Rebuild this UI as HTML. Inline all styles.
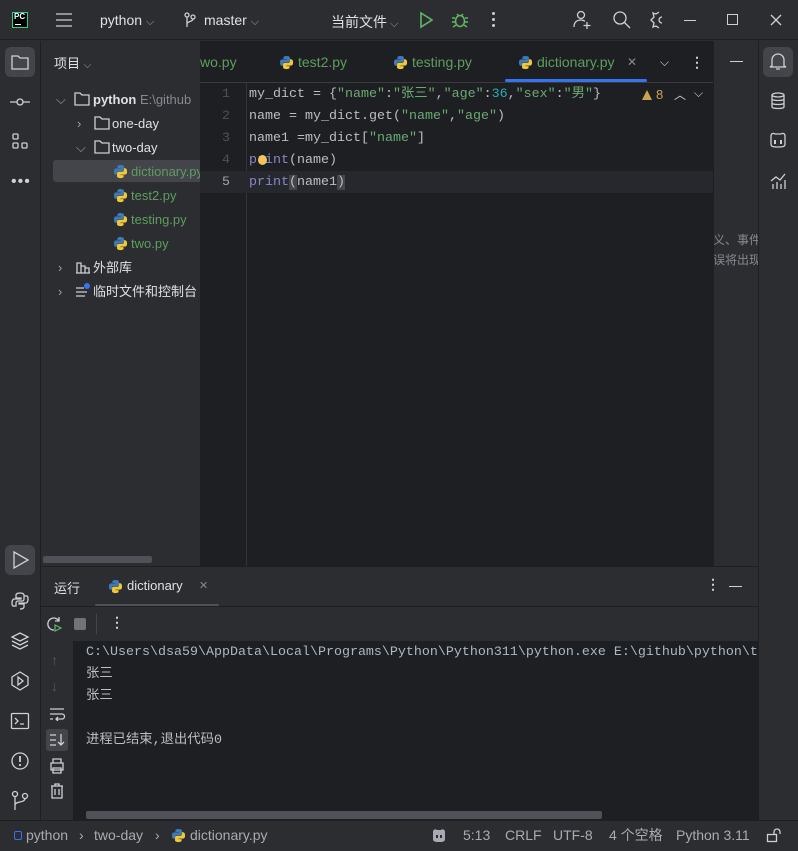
<!DOCTYPE html>
<html><head><meta charset="utf-8">
<style>
*{margin:0;padding:0;box-sizing:border-box}
body{width:798px;height:851px;overflow:hidden;background:#2b2d30;font-family:"Liberation Sans","Noto Sans CJK SC",sans-serif;font-size:13px;color:#dfe1e5;position:relative}
.a{position:absolute;white-space:nowrap}
.mono{font-family:"Liberation Mono","Noto Sans CJK SC",monospace;font-size:13.33px;white-space:pre}
.g{color:#6aab73}.k{color:#cf8e6d}.n{color:#2aacb8}.f{color:#56a8f5}.b{color:#8888c6}
.ic{stroke:#ced0d6;fill:none;stroke-width:1.3}
.grn{color:#5e9e5e}
</style></head><body>
<svg width="0" height="0" style="position:absolute"><defs>
<symbol id="py" viewBox="0 0 16 16"><path d="M8 1C4.5 1 4.7 2.5 4.7 2.5V4.2H8.1V4.7H3.3S1 4.4 1 8s2 3.5 2 3.5H4.3V9.8S4.2 7.7 6.3 7.7H9.7S11.7 7.7 11.7 5.8V2.9S12 1 8 1z" fill="#3d7ab8"/><path d="M8 15c3.5 0 3.3-1.5 3.3-1.5V11.8H7.9V11.3H12.7S15 11.6 15 8s-2-3.5-2-3.5H11.7V6.2S11.8 8.3 9.7 8.3H6.3S4.3 8.3 4.3 10.2V13.1S4 15 8 15z" fill="#f0c93a"/></symbol>
</defs></svg>

<!-- title bar -->
<div class="a" style="left:0;top:0;width:798px;height:40px;background:#2b2d30;border-bottom:1px solid #1e1f22"></div>
<div class="a" style="left:12px;top:12px;width:16px;height:16px;background:#000;border:1px solid #21d789"><div style="color:#fff;font-size:8px;font-weight:bold;line-height:8px;margin-left:1px">PC</div><div style="width:6px;height:1px;background:#fff;margin:3px 0 0 2px"></div></div>
<svg class="a" style="left:55px;top:12px" width="18" height="16"><path class="ic" d="M1 2H17M1 8H17M1 14H17"/></svg>
<div class="a" style="left:100px;top:12px;font-size:14px">python <span style="color:#9da0a8;font-size:11px">⌵</span></div>
<svg class="a" style="left:183px;top:12px" width="14" height="16"><circle class="ic" cx="4" cy="3" r="2"/><circle class="ic" cx="10" cy="5" r="2"/><path class="ic" d="M4 5V15M10 7C10 10 4 9 4 12"/></svg>
<div class="a" style="left:204px;top:12px;font-size:14px">master <span style="color:#9da0a8;font-size:11px">⌵</span></div>
<div class="a" style="left:331px;top:12px;font-size:14px">当前文件<span style="color:#9da0a8;font-size:11px"> ⌵</span></div>
<svg class="a" style="left:418px;top:11px" width="16" height="18"><path d="M3 2L14 9L3 16Z" fill="none" stroke="#5fb865" stroke-width="1.6"/></svg>
<svg class="a" style="left:451px;top:11px" width="18" height="18"><ellipse cx="9" cy="10" rx="4.5" ry="5.5" fill="none" stroke="#5fb865" stroke-width="1.5"/><path d="M1 7H4M14 7H17M1 11H4M14 11H17M2 16L5 14M16 16L13 14M6 3L8 5M12 3L10 5" stroke="#5fb865" stroke-width="1.4"/></svg>
<div class="a" style="left:492px;top:12px;width:3px;height:16px"><div style="width:3px;height:3px;background:#ced0d6;border-radius:2px;margin-bottom:3px"></div><div style="width:3px;height:3px;background:#ced0d6;border-radius:2px;margin-bottom:3px"></div><div style="width:3px;height:3px;background:#ced0d6;border-radius:2px"></div></div>
<svg class="a" style="left:573px;top:10px" width="20" height="20"><circle class="ic" cx="8" cy="5" r="3.5"/><path class="ic" d="M1 17C1 12 4 10 8 10C10 10 11 11 12 11M14 12V19M10.5 15.5H17.5"/></svg>
<svg class="a" style="left:612px;top:10px" width="20" height="20"><circle class="ic" cx="8" cy="8" r="6" stroke-width="1.5"/><path class="ic" d="M12.5 12.5L18 18" stroke-width="1.6"/></svg>
<svg class="a" style="left:650px;top:10px" width="14" height="20"><path class="ic" d="M9 2L6 4L3 3L4 7L1 10L4 13L3 17L6 16L9 18M12 7A3 3 0 0 0 12 13"/></svg>
<div class="a" style="left:684px;top:20px;width:12px;height:1px;background:#ced0d6"></div>
<div class="a" style="left:727px;top:14px;width:11px;height:11px;border:1px solid #ced0d6"></div>
<svg class="a" style="left:770px;top:14px" width="12" height="12"><path class="ic" d="M1 1L11 11M11 1L1 11"/></svg>

<!-- left strip -->
<div class="a" style="left:0;top:41px;width:41px;height:779px;background:#2b2d30;border-right:1px solid #1e1f22"></div>
<div class="a" style="left:5px;top:47px;width:30px;height:30px;background:#43454a;border-radius:6px"></div>
<svg class="a" style="left:11px;top:53px" width="18" height="18"><path class="ic" d="M1 3H7L9 5H17V16H1Z"/></svg>
<svg class="a" style="left:10px;top:95px" width="20" height="14"><circle class="ic" cx="10" cy="7" r="3"/><path class="ic" d="M0 7H7M13 7H20"/></svg>
<svg class="a" style="left:11px;top:133px" width="18" height="18"><rect class="ic" x="2" y="1" width="5" height="5" rx="1"/><rect class="ic" x="2" y="10" width="5" height="5" rx="1"/><rect class="ic" x="11" y="10" width="5" height="5" rx="1"/></svg>
<div class="a" style="left:11px;top:180px;color:#ced0d6;font-size:16px;letter-spacing:1px;line-height:4px">•••</div>
<div class="a" style="left:5px;top:545px;width:30px;height:30px;background:#43454a;border-radius:6px"></div>
<svg class="a" style="left:12px;top:551px" width="18" height="18"><path class="ic" d="M2 1L16 9L2 17Z" stroke-width="1.4"/></svg>
<svg class="a" style="left:10px;top:591px" width="20" height="20"><path class="ic" d="M10 2C6 2 6 4 6 4V7H11V8H4S2 8 2 12 4 15 4 15H6V12S6 10 8 10H12S14 10 14 8V4S14 2 10 2ZM10 18C14 18 14 16 14 16V13H9V12H16S18 12 18 8 16 5 16 5H14"/></svg>
<svg class="a" style="left:10px;top:631px" width="20" height="20"><path class="ic" d="M10 2L18 6L10 10L2 6ZM2 10L10 14L18 10M2 14L10 18L18 14"/></svg>
<svg class="a" style="left:10px;top:671px" width="20" height="20"><path class="ic" d="M10 1L18 6V14L10 19L2 14V6Z"/><path class="ic" d="M8 6L13 10L8 14Z"/></svg>
<svg class="a" style="left:10px;top:711px" width="20" height="20"><rect class="ic" x="1.5" y="2.5" width="17" height="15" rx="1"/><path class="ic" d="M5 7L8 10L5 13M10 13H14"/></svg>
<svg class="a" style="left:10px;top:751px" width="20" height="20"><circle class="ic" cx="10" cy="10" r="8"/><path d="M10 5V11" stroke="#ced0d6" stroke-width="1.8"/><circle cx="10" cy="14" r="1.1" fill="#ced0d6"/></svg>
<svg class="a" style="left:10px;top:790px" width="20" height="22"><circle class="ic" cx="5" cy="4" r="2.5"/><circle class="ic" cx="15" cy="6" r="2.5"/><path class="ic" d="M5 6.5V20M15 8.5C15 13 5 11 5 15"/></svg>

<!-- project panel -->
<div class="a" style="left:41px;top:41px;width:159px;height:525px;background:#2b2d30"></div>
<div class="a" style="left:54px;top:53px;font-size:13px">项目 <span style="color:#9da0a8;font-size:10px">⌵</span></div>
<div class="a" style="left:53px;top:160px;width:147px;height:22px;background:#43454a;border-radius:3px 0 0 3px"></div>
<div class="a" style="left:0;top:0;width:200px;height:320px;font-size:13px;line-height:24px;overflow:hidden">
<div class="a" style="left:56px;top:88px;color:#9da0a8">⌵</div>
<svg class="a" style="left:74px;top:92px" width="16" height="14"><path class="ic" d="M1 1H6L8 3H15V13H1Z"/></svg>
<div class="a" style="left:93px;top:88px;font-weight:bold">python <span style="color:#868991;font-weight:normal">E:\github</span></div>
<div class="a" style="left:77px;top:112px;color:#9da0a8">›</div>
<svg class="a" style="left:94px;top:116px" width="16" height="14"><path class="ic" d="M1 1H6L8 3H15V13H1Z"/></svg>
<div class="a" style="left:112px;top:112px">one-day</div>
<div class="a" style="left:76px;top:136px;color:#9da0a8">⌵</div>
<svg class="a" style="left:94px;top:140px" width="16" height="14"><path class="ic" d="M1 1H6L8 3H15V13H1Z"/></svg>
<div class="a" style="left:112px;top:136px">two-day</div>
<svg class="a" style="left:113px;top:164px" width="15" height="15"><use href="#py"/></svg>
<div class="a grn" style="left:131px;top:160px">dictionary.py</div>
<svg class="a" style="left:113px;top:188px" width="15" height="15"><use href="#py"/></svg>
<div class="a grn" style="left:131px;top:184px">test2.py</div>
<svg class="a" style="left:113px;top:212px" width="15" height="15"><use href="#py"/></svg>
<div class="a grn" style="left:131px;top:208px">testing.py</div>
<svg class="a" style="left:113px;top:236px" width="15" height="15"><use href="#py"/></svg>
<div class="a grn" style="left:131px;top:232px">two.py</div>
<div class="a" style="left:58px;top:256px;color:#9da0a8">›</div>
<svg class="a" style="left:75px;top:260px" width="16" height="14"><path class="ic" d="M1 13H15M2 13V3H6V13M6 6H10V13M10 8H14V13"/></svg>
<div class="a" style="left:93px;top:256px">外部库</div>
<div class="a" style="left:58px;top:280px;color:#9da0a8">›</div>
<svg class="a" style="left:75px;top:282px" width="16" height="16"><path class="ic" d="M1 6H9M1 10H12M1 14H10"/><circle cx="12" cy="4" r="3" fill="#3574f0"/></svg>
<div class="a" style="left:93px;top:280px">临时文件和控制台</div>
</div>
<div class="a" style="left:43px;top:556px;width:109px;height:7px;background:#4e5157;border-radius:2px"></div>

<!-- editor -->
<div class="a" style="left:200px;top:41px;width:513px;height:525px;background:#1e1f22"></div>
<div class="a" style="left:200px;top:82px;width:513px;height:1px;background:#393b40"></div>
<div class="a" style="left:200px;top:42px;width:513px;height:41px;font-size:14px;line-height:41px;overflow:hidden">
<span class="a grn" style="left:0">wo.py</span>
<svg class="a" style="left:79px;top:13px" width="15" height="15"><use href="#py"/></svg><span class="a grn" style="left:98px">test2.py</span>
<svg class="a" style="left:193px;top:13px" width="15" height="15"><use href="#py"/></svg><span class="a grn" style="left:212px">testing.py</span>
<svg class="a" style="left:318px;top:13px" width="15" height="15"><use href="#py"/></svg><span class="a grn" style="left:337px">dictionary.py</span>
<span class="a" style="left:427px;color:#868991;font-size:12px">✕</span>
<span class="a" style="left:460px;color:#ced0d6;font-size:12px">⌵</span>
<span class="a" style="left:490px;color:#ced0d6;font-weight:bold">⋮</span>
</div>
<div class="a" style="left:505px;top:79px;width:142px;height:3px;background:#3574f0;border-radius:2px"></div>
<div class="a" style="left:246px;top:83px;width:1px;height:483px;background:#313438"></div>
<div class="a" style="left:200px;top:171px;width:513px;height:22px;background:#26282e"></div>
<div class="a mono" style="left:200px;top:84px;width:30px;text-align:right;color:#4b5059;line-height:22px">1
2
3
4
<span style="color:#a1a3ab">5</span></div>
<div class="a mono" style="left:249px;top:84px;line-height:22px;color:#bcbec4">my_dict = {<span class="g">"name"</span>:<span class="g">"张三"</span>,<span class="g">"age"</span>:<span class="n">36</span>,<span class="g">"sex"</span>:<span class="g">"男"</span>}
name = my_dict.get(<span class="g">"name"</span>,<span class="g">"age"</span>)
name1 =my_dict[<span class="g">"name"</span>]
<span class="b">print</span>(name)
<span class="b">print</span><span style="background:#43454a">(</span>name1<span style="background:#43454a">)</span></div>
<div class="a" style="left:258px;top:155px;width:9px;height:10px;background:#f2c55c;border-radius:50%"></div>
<svg class="a" style="left:641px;top:89px" width="12" height="12"><path d="M6 1L11 11H1Z" fill="#c7a450"/></svg>
<div class="a" style="left:656px;top:87px;color:#c7a450;font-size:13px">8</div>
<div class="a" style="left:674px;top:86px;color:#ced0d6;font-size:12px">︿</div>
<div class="a" style="left:694px;top:86px;color:#ced0d6;font-size:12px">⌵</div>

<!-- right panel -->
<div class="a" style="left:713px;top:41px;width:45px;height:525px;background:#2b2d30;border-left:1px solid #1e1f22;overflow:hidden">
<div class="a" style="left:16px;top:20px;width:13px;height:1px;background:#ced0d6"></div>
<div class="a" style="left:-1px;top:189px;color:#868991;font-size:12px;line-height:20px">义、事件<br>误将出现</div>
</div>
<div class="a" style="left:758px;top:41px;width:40px;height:779px;background:#2b2d30;border-left:1px solid #1e1f22"></div>
<div class="a" style="left:763px;top:47px;width:30px;height:30px;background:#43454a;border-radius:6px"></div>
<svg class="a" style="left:769px;top:52px" width="18" height="20"><path class="ic" d="M3 14V8A6 6 0 0 1 15 8V14L17 15H1ZM7 17H11"/></svg>
<svg class="a" style="left:770px;top:92px" width="16" height="18"><ellipse class="ic" cx="8" cy="3" rx="6" ry="2"/><path class="ic" d="M2 3V15C2 17 14 17 14 15V3M2 7C2 9 14 9 14 7M2 11C2 13 14 13 14 11"/></svg>
<svg class="a" style="left:768px;top:131px" width="20" height="18"><path class="ic" d="M3 5C3 2 6 2 7 3H13C14 2 17 2 17 5V13C17 16 14 16 10 16C6 16 3 16 3 13Z"/><rect x="6" y="9" width="2" height="4" fill="#ced0d6"/><rect x="12" y="9" width="2" height="4" fill="#ced0d6"/></svg>
<svg class="a" style="left:770px;top:172px" width="16" height="18"><path class="ic" d="M1 9L6 5L10 8L15 2M3 17V12M7 17V10M11 17V12M15 17V8"/></svg>

<!-- run panel -->
<div class="a" style="left:41px;top:566px;width:717px;height:1px;background:#1e1f22"></div>
<div class="a" style="left:54px;top:578px;font-size:13px">运行</div>
<svg class="a" style="left:108px;top:579px" width="15" height="15"><use href="#py"/></svg>
<div class="a" style="left:127px;top:578px;font-size:13px">dictionary</div>
<div class="a" style="left:199px;top:579px;color:#868991;font-size:11px">✕</div>
<div class="a" style="left:95px;top:604px;width:124px;height:2px;background:#4e5157;border-radius:1px"></div>
<div class="a" style="left:706px;top:576px;color:#ced0d6;font-weight:bold;font-size:14px">⋮</div>
<div class="a" style="left:729px;top:586px;width:13px;height:1px;background:#ced0d6"></div>
<div class="a" style="left:41px;top:606px;width:717px;height:1px;background:#1e1f22"></div>
<svg class="a" style="left:46px;top:616px" width="16" height="16"><path class="ic" d="M13 5A6 6 0 1 0 8 14M13 1V5H9"/><path d="M9 9L15 12L9 15Z" fill="none" stroke="#5fb865" stroke-width="1.2"/></svg>
<div class="a" style="left:74px;top:618px;width:12px;height:12px;background:#6f737a;border-radius:2px"></div>
<div class="a" style="left:96px;top:614px;width:1px;height:20px;background:#43454a"></div>
<div class="a" style="left:110px;top:614px;color:#ced0d6;font-weight:bold;font-size:14px">⋮</div>
<div class="a" style="left:41px;top:641px;width:717px;height:179px;background:#1e1f22"></div>
<div class="a" style="left:41px;top:641px;width:32px;height:179px;background:#2b2d30"></div>
<div class="a" style="left:51px;top:652px;color:#55585e;font-size:14px">↑</div>
<div class="a" style="left:51px;top:678px;color:#55585e;font-size:14px">↓</div>
<svg class="a" style="left:48px;top:707px" width="18" height="14"><path class="ic" d="M2 2H16M2 7H14A2.5 2.5 0 0 1 14 12H8M10 10L8 12L10 14M2 12H5"/></svg>
<div class="a" style="left:46px;top:729px;width:22px;height:22px;background:#43454a;border-radius:3px"></div>
<svg class="a" style="left:49px;top:733px" width="17" height="14"><path class="ic" d="M1 2H7M1 7H7M1 12H7M12 1V12M9 9L12 12L15 9"/></svg>
<svg class="a" style="left:49px;top:758px" width="16" height="16"><path class="ic" d="M4 5V1H12V5M2 5H14V12H2ZM4 10H12V15H4Z"/></svg>
<svg class="a" style="left:50px;top:783px" width="14" height="16"><path class="ic" d="M1 3H13M5 3V1H9V3M2 3V15H12V3M5 6V12M9 6V12"/></svg>
<div class="a mono" style="left:86px;top:642px;line-height:22px;color:#bcbec4;width:671px;overflow:hidden"><span style="color:#a9b7c6">C:\Users\dsa59\AppData\Local\Programs\Python\Python311\python.exe E:\github\python\t</span>
张三
张三

进程已结束,退出代码0</div>
<div class="a" style="left:86px;top:811px;width:516px;height:8px;background:#4e5157;border-radius:2px"></div>

<!-- status bar -->
<div class="a" style="left:0;top:820px;width:798px;height:31px;background:#2b2d30;border-top:1px solid #1e1f22"></div>
<div class="a" style="left:0;top:820px;width:798px;height:31px;line-height:30px;font-size:14px;color:#a8abb2">
<div class="a" style="left:14px;top:11px;width:8px;height:9px;border:1.5px solid #3574f0;border-radius:2px"></div>
<span class="a" style="left:26px">python</span>
<span class="a" style="left:79px">›</span>
<span class="a" style="left:94px">two-day</span>
<span class="a" style="left:155px">›</span>
<svg class="a" style="left:171px;top:8px" width="15" height="15"><use href="#py"/></svg>
<span class="a" style="left:190px">dictionary.py</span>
<svg class="a" style="left:431px;top:8px" width="16" height="15"><path d="M2 4C2 1 5 1 6 2H10C11 1 14 1 14 4V11C14 14 11 14 8 14C5 14 2 14 2 11Z" fill="#a8abb2"/><rect x="5" y="7" width="2" height="3" fill="#2b2d30"/><rect x="9" y="7" width="2" height="3" fill="#2b2d30"/></svg>
<span class="a" style="left:463px">5:13</span>
<span class="a" style="left:505px">CRLF</span>
<span class="a" style="left:553px">UTF-8</span>
<span class="a" style="left:609px">4 个空格</span>
<span class="a" style="left:676px">Python 3.11</span>
<svg class="a" style="left:766px;top:8px" width="16" height="15"><rect class="ic" x="1.5" y="6.5" width="9" height="7"/><path class="ic" d="M8 6.5V4A3 3 0 0 1 14 4V6"/></svg>
</div>
</body></html>
